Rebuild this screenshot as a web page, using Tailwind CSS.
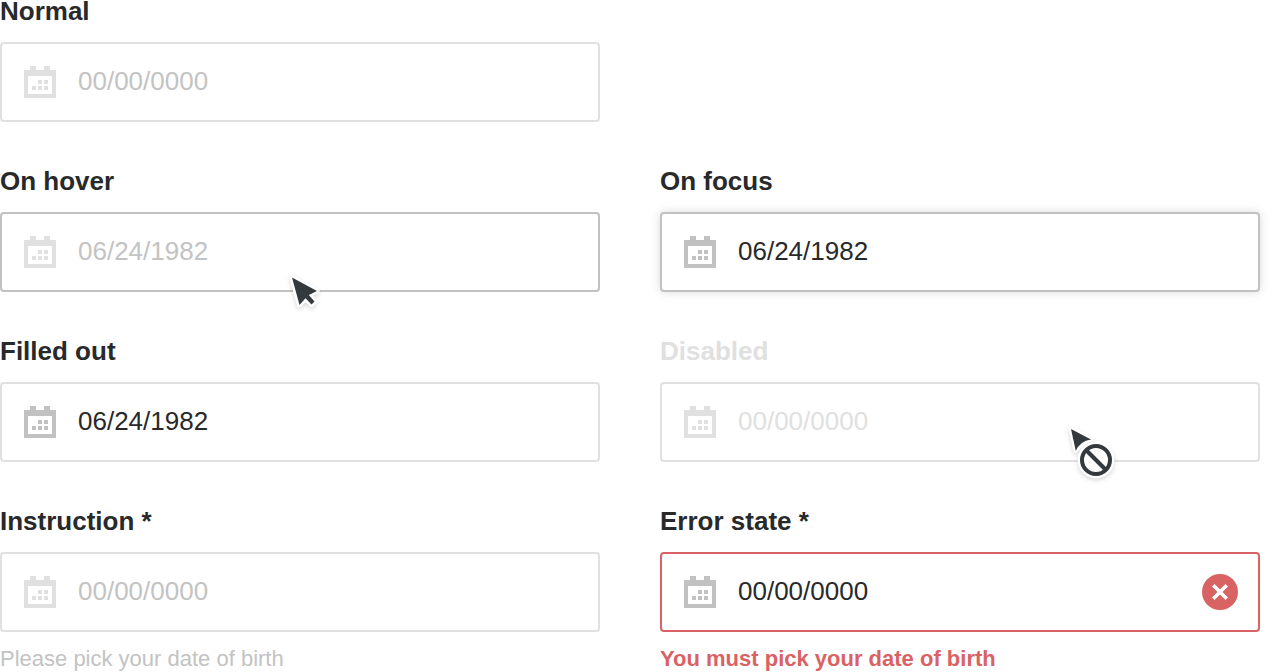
<!DOCTYPE html>
<html lang="en">
<head>
<meta charset="utf-8">
<meta name="viewport" content="width=device-width, initial-scale=1">
<title>Date field states</title>
<script src="https://cdn.jsdelivr.net/npm/@tailwindcss/browser@4"></script>
</head>
<body class="bg-white font-['Liberation_Sans',Arial,sans-serif] text-[26px] text-[#28292b]">
<svg class="hidden" aria-hidden="true">
  <symbol id="calendar" viewBox="0 0 32 32">
    <path fill="currentColor" fill-rule="evenodd" shape-rendering="crispEdges" d="M6 0h6v4h8V0h6v4h6v28H0V4h6zM4 10v18h24V10zM14 14h4v4h-4zM20 14h4v4h-4zM8 20h4v4H8zM14 20h4v4h-4zM20 20h4v4h-4z"/>
  </symbol>
</svg>
<main class="grid grid-cols-1 gap-x-15 gap-y-12 md:grid-cols-2 md:pr-5">
  <div class="md:col-span-2 md:grid md:grid-cols-2 md:gap-x-15">
    <div>
      <label for="normal" class="mb-5 block leading-[22px] font-bold">Normal</label>
      <div class="flex h-20 items-center rounded-sm border-2 border-[#e0e0e0] px-[22px]">
        <svg class="size-8 shrink-0 text-[#e0e0e0]" aria-hidden="true"><use href="#calendar"/></svg>
        <input id="normal" type="text" placeholder="00/00/0000" class="ml-[22px] min-w-0 flex-1 pb-0.5 outline-none placeholder:text-[#c3c3c3]">
      </div>
    </div>
  </div>

  <div>
    <label for="hover" class="mb-5 block leading-[22px] font-bold">On hover</label>
    <div class="relative flex h-20 items-center rounded-sm border-2 border-[#c1c1c1] px-[22px]">
      <svg class="size-8 shrink-0 text-[#e0e0e0]" aria-hidden="true"><use href="#calendar"/></svg>
      <input id="hover" type="text" placeholder="06/24/1982" class="ml-[22px] min-w-0 flex-1 pb-0.5 outline-none placeholder:text-[#c3c3c3]">
      <svg class="pointer-events-none absolute top-14 left-[282px] h-10 w-10 drop-shadow-[0_2px_2px_rgba(0,0,0,0.15)]" viewBox="284 270 40 40" aria-hidden="true">
        <path d="M292 277.500L317 291L308.800 295L314.500 301.500L311.500 304.500L305.500 298.200L299.500 305Z" fill="#fff" stroke="#fff" stroke-width="5" stroke-linejoin="round"/>
        <path d="M292 277.500L317 291L308.800 295L314.500 301.500L311.500 304.500L305.500 298.200L299.500 305Z" fill="#33393c"/>
      </svg>
    </div>
  </div>
  <div>
    <label for="focus" class="mb-5 block leading-[22px] font-bold">On focus</label>
    <div class="flex h-20 items-center rounded-sm border-2 border-[#c1c1c1] px-[22px] shadow-[0_0_10px_rgba(0,0,0,0.15)]">
      <svg class="size-8 shrink-0 text-[#c1c1c1]" aria-hidden="true"><use href="#calendar"/></svg>
      <input id="focus" type="text" value="06/24/1982" class="ml-[22px] min-w-0 flex-1 pb-0.5 outline-none">
    </div>
  </div>

  <div>
    <label for="filled" class="mb-5 block leading-[22px] font-bold">Filled out</label>
    <div class="flex h-20 items-center rounded-sm border-2 border-[#e0e0e0] px-[22px]">
      <svg class="size-8 shrink-0 text-[#c1c1c1]" aria-hidden="true"><use href="#calendar"/></svg>
      <input id="filled" type="text" value="06/24/1982" class="ml-[22px] min-w-0 flex-1 pb-0.5 outline-none">
    </div>
  </div>
  <div>
    <label for="disabled" class="mb-5 block leading-[22px] font-bold text-[#e0e0e0]">Disabled</label>
    <div class="relative flex h-20 items-center rounded-sm border-2 border-[#e0e0e0] px-[22px]">
      <svg class="size-8 shrink-0 text-[#e0e0e0]" aria-hidden="true"><use href="#calendar"/></svg>
      <input id="disabled" type="text" placeholder="00/00/0000" disabled class="ml-[22px] min-w-0 flex-1 pb-0.5 outline-none placeholder:text-[#e0e0e0]">
      <svg class="pointer-events-none absolute top-9 right-[138px] h-16 w-15 drop-shadow-[0_2px_2px_rgba(0,0,0,0.15)]" viewBox="1060 420 60 64" aria-hidden="true">
        <path d="M1071 429L1090.500 439L1083 443L1075.800 450Z" fill="#fff" stroke="#fff" stroke-width="5" stroke-linejoin="round"/>
        <path d="M1071 429L1091 439.500Q1080 441 1075.800 451Z" fill="#33393c"/>
        <circle cx="1096" cy="460" r="18.500" fill="#fff"/>
        <circle cx="1096" cy="460" r="14" fill="none" stroke="#33393c" stroke-width="4"/>
        <path d="M1086 450L1106 470" stroke="#33393c" stroke-width="4"/>
      </svg>
    </div>
  </div>

  <div>
    <label for="instruction" class="mb-5 block leading-[22px] font-bold">Instruction *</label>
    <div class="flex h-20 items-center rounded-sm border-2 border-[#e0e0e0] px-[22px]">
      <svg class="size-8 shrink-0 text-[#e0e0e0]" aria-hidden="true"><use href="#calendar"/></svg>
      <input id="instruction" type="text" placeholder="00/00/0000" aria-describedby="instruction-hint" class="ml-[22px] min-w-0 flex-1 pb-0.5 outline-none placeholder:text-[#c3c3c3]">
    </div>
    <p id="instruction-hint" class="mt-[15px] text-[22px] leading-6 text-[#c3c3c3]">Please pick your date of birth</p>
  </div>
  <div>
    <label for="error" class="mb-5 block leading-[22px] font-bold">Error state *</label>
    <div class="flex h-20 items-center rounded-sm border-2 border-[#d96263] pr-5 pl-[22px]">
      <svg class="size-8 shrink-0 text-[#c1c1c1]" aria-hidden="true"><use href="#calendar"/></svg>
      <input id="error" type="text" value="00/00/0000" aria-invalid="true" aria-describedby="error-hint" class="ml-[22px] min-w-0 flex-1 pb-0.5 outline-none">
      <button type="button" aria-label="Clear" class="size-9 shrink-0 rounded-full bg-[#d96263]">
        <svg class="size-9" viewBox="0 0 36 36" fill="none" stroke="#fff" stroke-width="3.600" aria-hidden="true"><path d="M11.300 11.300l13.400 13.400M24.700 11.300L11.300 24.700"/></svg>
      </button>
    </div>
    <p id="error-hint" class="mt-[15px] text-[22px] leading-6 font-bold text-[#d96263]">You must pick your date of birth</p>
  </div>
</main>
</body>
</html>
